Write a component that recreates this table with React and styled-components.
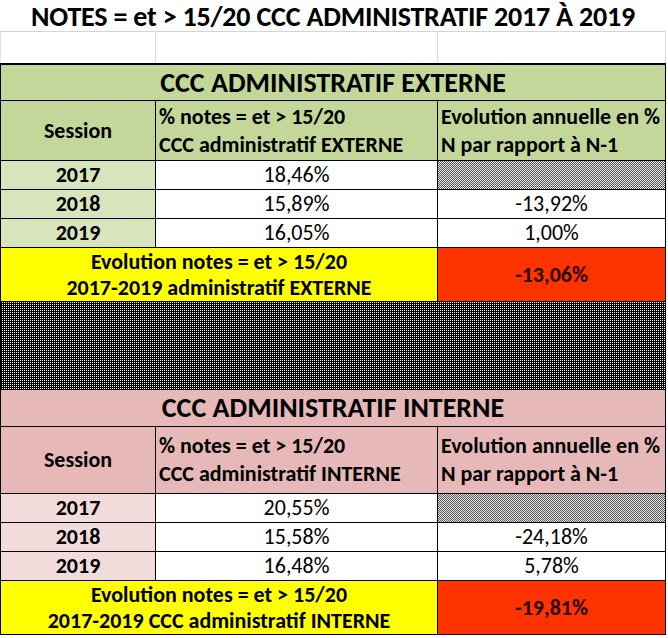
import React from 'react';
import styled, { createGlobalStyle } from 'styled-components';

const GlobalStyle = createGlobalStyle`
  html, body {
    margin: 0;
    padding: 0;
    background: #ffffff;
  }
  body {
    font-family: Carlito, Calibri, Lato, "Open Sans", sans-serif;
    color: #000;
  }
`;

const THEMES = {
  green: { head: '#c4d79b', year: '#d8e4bc' },
  pink: { head: '#e6b8b7', year: '#f2dcdb' },
};

const SECTIONS = [
  {
    theme: 'green',
    name: 'EXTERNE',
    titleHeight: 35,
    headHeight: 59,
    rows: [
      { year: '2017', value: '18,46%', evo: null },
      { year: '2018', value: '15,89%', evo: '-13,92%' },
      { year: '2019', value: '16,05%', evo: '1,00%' },
    ],
    total: ['Evolution notes = et > 15/20', '2017-2019 administratif EXTERNE'],
    totalValue: '-13,06%',
  },
  {
    theme: 'pink',
    name: 'INTERNE',
    titleHeight: 36,
    headHeight: 66,
    rows: [
      { year: '2017', value: '20,55%', evo: null },
      { year: '2018', value: '15,58%', evo: '-24,18%' },
      { year: '2019', value: '16,48%', evo: '5,78%' },
    ],
    total: ['Evolution notes = et > 15/20', '2017-2019 CCC administratif INTERNE'],
    totalValue: '-19,81%',
  },
];

const Page = styled.div`
  width: 668px;
  display: flex;
  flex-direction: column;
`;

const Title = styled.h1`
  margin: 0;
  width: 666px;
  height: 32px;
  border-bottom: 1px solid #d4d4d4;
  display: flex;
  align-items: center;
  justify-content: center;
  font-size: 28px;
  font-weight: 700;
  letter-spacing: -0.2px;
  padding-top: 2px;
  box-sizing: border-box;
`;

const BlankRow = styled.div`
  display: grid;
  grid-template-columns: 155px 282px 229px;
  width: 666px;
  height: 31px;
`;

const BlankCell = styled.div`
  border-left: 1px solid #d9d9d9;
  &:first-child {
    border-left-color: #e4e4e4;
  }
  &:last-child {
    border-right: 1px solid #d9d9d9;
  }
`;

const Table = styled.div`
  display: grid;
  grid-template-columns: 154px 281px 227px;
  gap: 1px;
  padding: 1px;
  border-top: 1px solid #000;
  background: #000;
  width: 666px;
  box-sizing: border-box;
`;

const Cell = styled.div`
  grid-column: ${p => (p.$span ? `span ${p.$span}` : 'auto')};
  height: ${p => p.$h}px;
  background: ${p => p.$bg || '#fff'};
  color: ${p => p.$ink || '#000'};
  display: flex;
  flex-direction: column;
  justify-content: center;
  align-items: ${p => (p.$left ? 'flex-start' : 'center')};
  padding-left: ${p => (p.$left ? '3px' : '0')};
  font-size: ${p => p.$size || 22}px;
  font-weight: ${p => (p.$bold ? 700 : 400)};
  line-height: ${p => p.$lh || 28}px;
  white-space: nowrap;
  overflow: hidden;
`;

const Hatch = styled.div`
  grid-column: span ${p => p.$span || 1};
  height: ${p => p.$h}px;
  background-color: ${p => (p.$dark ? '#000' : '#555')};
  background-image: ${p =>
    p.$dark
      ? 'conic-gradient(#fff 25%, transparent 0)'
      : 'conic-gradient(#e8e8e8 25%, transparent 0 50%, #e8e8e8 0 75%, transparent 0)'};
  background-size: 2px 2px;
`;

const Section = ({ data }) => {
  const theme = THEMES[data.theme];
  return (
    <>
      <Cell $span={3} $h={data.titleHeight} $bg={theme.head} $bold $size={28}>
        CCC ADMINISTRATIF {data.name}
      </Cell>
      <Cell $h={data.headHeight} $bg={theme.head} $bold>
        Session
      </Cell>
      <Cell $h={data.headHeight} $bg={theme.head} $bold $left>
        <span>% notes = et &gt; 15/20</span>
        <span>CCC administratif {data.name}</span>
      </Cell>
      <Cell $h={data.headHeight} $bg={theme.head} $bold $left>
        <span>Evolution annuelle en %</span>
        <span>N par rapport à N-1</span>
      </Cell>
      {data.rows.map(row => (
        <React.Fragment key={row.year}>
          <Cell $h={28} $bg={theme.year} $bold>
            {row.year}
          </Cell>
          <Cell $h={28}>{row.value}</Cell>
          {row.evo ? <Cell $h={28}>{row.evo}</Cell> : <Hatch $h={28} />}
        </React.Fragment>
      ))}
      <Cell $span={2} $h={53} $bg="#ffff00" $bold $lh={26}>
        <span>{data.total[0]}</span>
        <span>{data.total[1]}</span>
      </Cell>
      <Cell $h={53} $bg="#ff3300" $ink="#2a0800" $bold>
        {data.totalValue}
      </Cell>
    </>
  );
};

const App = () => {
  return (
    <Page>
      <GlobalStyle />
      <Title>NOTES = et &gt; 15/20 CCC ADMINISTRATIF 2017 À 2019</Title>
      <BlankRow>
        <BlankCell />
        <BlankCell />
        <BlankCell />
      </BlankRow>
      <Table>
        <Section data={SECTIONS[0]} />
        <Hatch $span={3} $h={87} $dark />
        <Section data={SECTIONS[1]} />
      </Table>
    </Page>
  );
};

export default App;
